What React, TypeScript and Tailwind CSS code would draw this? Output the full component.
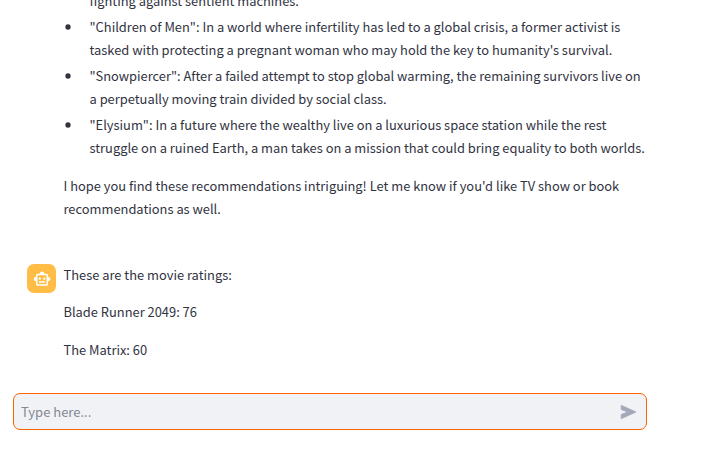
import { MdOutlineSmartToy } from 'react-icons/md';

const movies = [
  ['"Children of Men": In a world where infertility has led to a global crisis, a former activist is', "tasked with protecting a pregnant woman who may hold the key to humanity's survival."],
  ['"Snowpiercer": After a failed attempt to stop global warming, the remaining survivors live on', 'a perpetually moving train divided by social class.'],
  ['"Elysium": In a future where the wealthy live on a luxurious space station while the rest', 'struggle on a ruined Earth, a man takes on a mission that could bring equality to both worlds.'],
];

function Line({ text }: { text: string }) {
  return <span className="block whitespace-nowrap"><span>{text}</span></span>;
}

function Bullet() {
  return (
    <svg width="8" height="8" viewBox="0 0 8 8" fill="currentColor">
      <circle cx="4" cy="4" r="2.65" />
    </svg>
  );
}

function SendIcon() {
  return (
    <svg width="18" height="18" viewBox="0 0 18 18" fill="currentColor" stroke="currentColor" strokeLinejoin="round" strokeWidth="0.8">
      <path d="M2.2 2.3v4.2L8.8 9l-6.6 2.5v4.2L17 9z" />
    </svg>
  );
}

export default function App() {
  return (
    <div className="flex h-[459px] w-[711px] flex-col overflow-hidden bg-white font-['Noto_Sans_CJK_SC',sans-serif] text-[12.89px] leading-[23.04px] text-[#31333f]">
      <main className="h-[393px] shrink-0 overflow-hidden pl-[63.5px]">
        <ul className="-mt-[11px] flex flex-col gap-[2.88px]">
          <li className="pl-[26px]"><Line text="fighting against sentient machines." /></li>
          {movies.map((lines) => (
            <li key={lines[0]} className="flex">
              <span className="flex h-[25px] w-[26px] shrink-0 items-center"><Bullet /></span>
              <div>{lines.map((line) => <Line key={line} text={line} />)}</div>
            </li>
          ))}
        </ul>
        <p className="mt-[15px]">
          <Line text="I hope you find these recommendations intriguing! Let me know if you'd like TV show or book" />
          <Line text="recommendations as well." />
        </p>
        <section className="-ml-[36.5px] mt-[43px] flex gap-[7.5px]">
          <div className="mt-px flex size-[29px] shrink-0 items-center justify-center rounded-[7px] bg-[#ffbd45] text-white">
            <MdOutlineSmartToy size={18} />
          </div>
          <div className="flex flex-col gap-[14.4px]">
            <p>These are the movie ratings:</p>
            <p>Blade Runner 2049: 76</p>
            <p>The Matrix: 60</p>
          </div>
        </section>
      </main>
      <form className="ml-[13px] flex h-[37px] w-[634px] shrink-0 items-center rounded-[7px] border border-[#ff6000] bg-[#f0f2f6] pr-[9px] pl-[7px]">
        <input aria-label="Message" placeholder="Type here..." className="min-w-0 flex-1 bg-transparent text-[13px] outline-none placeholder:text-[#858792]" />
        <button type="button" aria-label="Send" className="text-[#a3a8b8]"><SendIcon /></button>
      </form>
    </div>
  );
}
